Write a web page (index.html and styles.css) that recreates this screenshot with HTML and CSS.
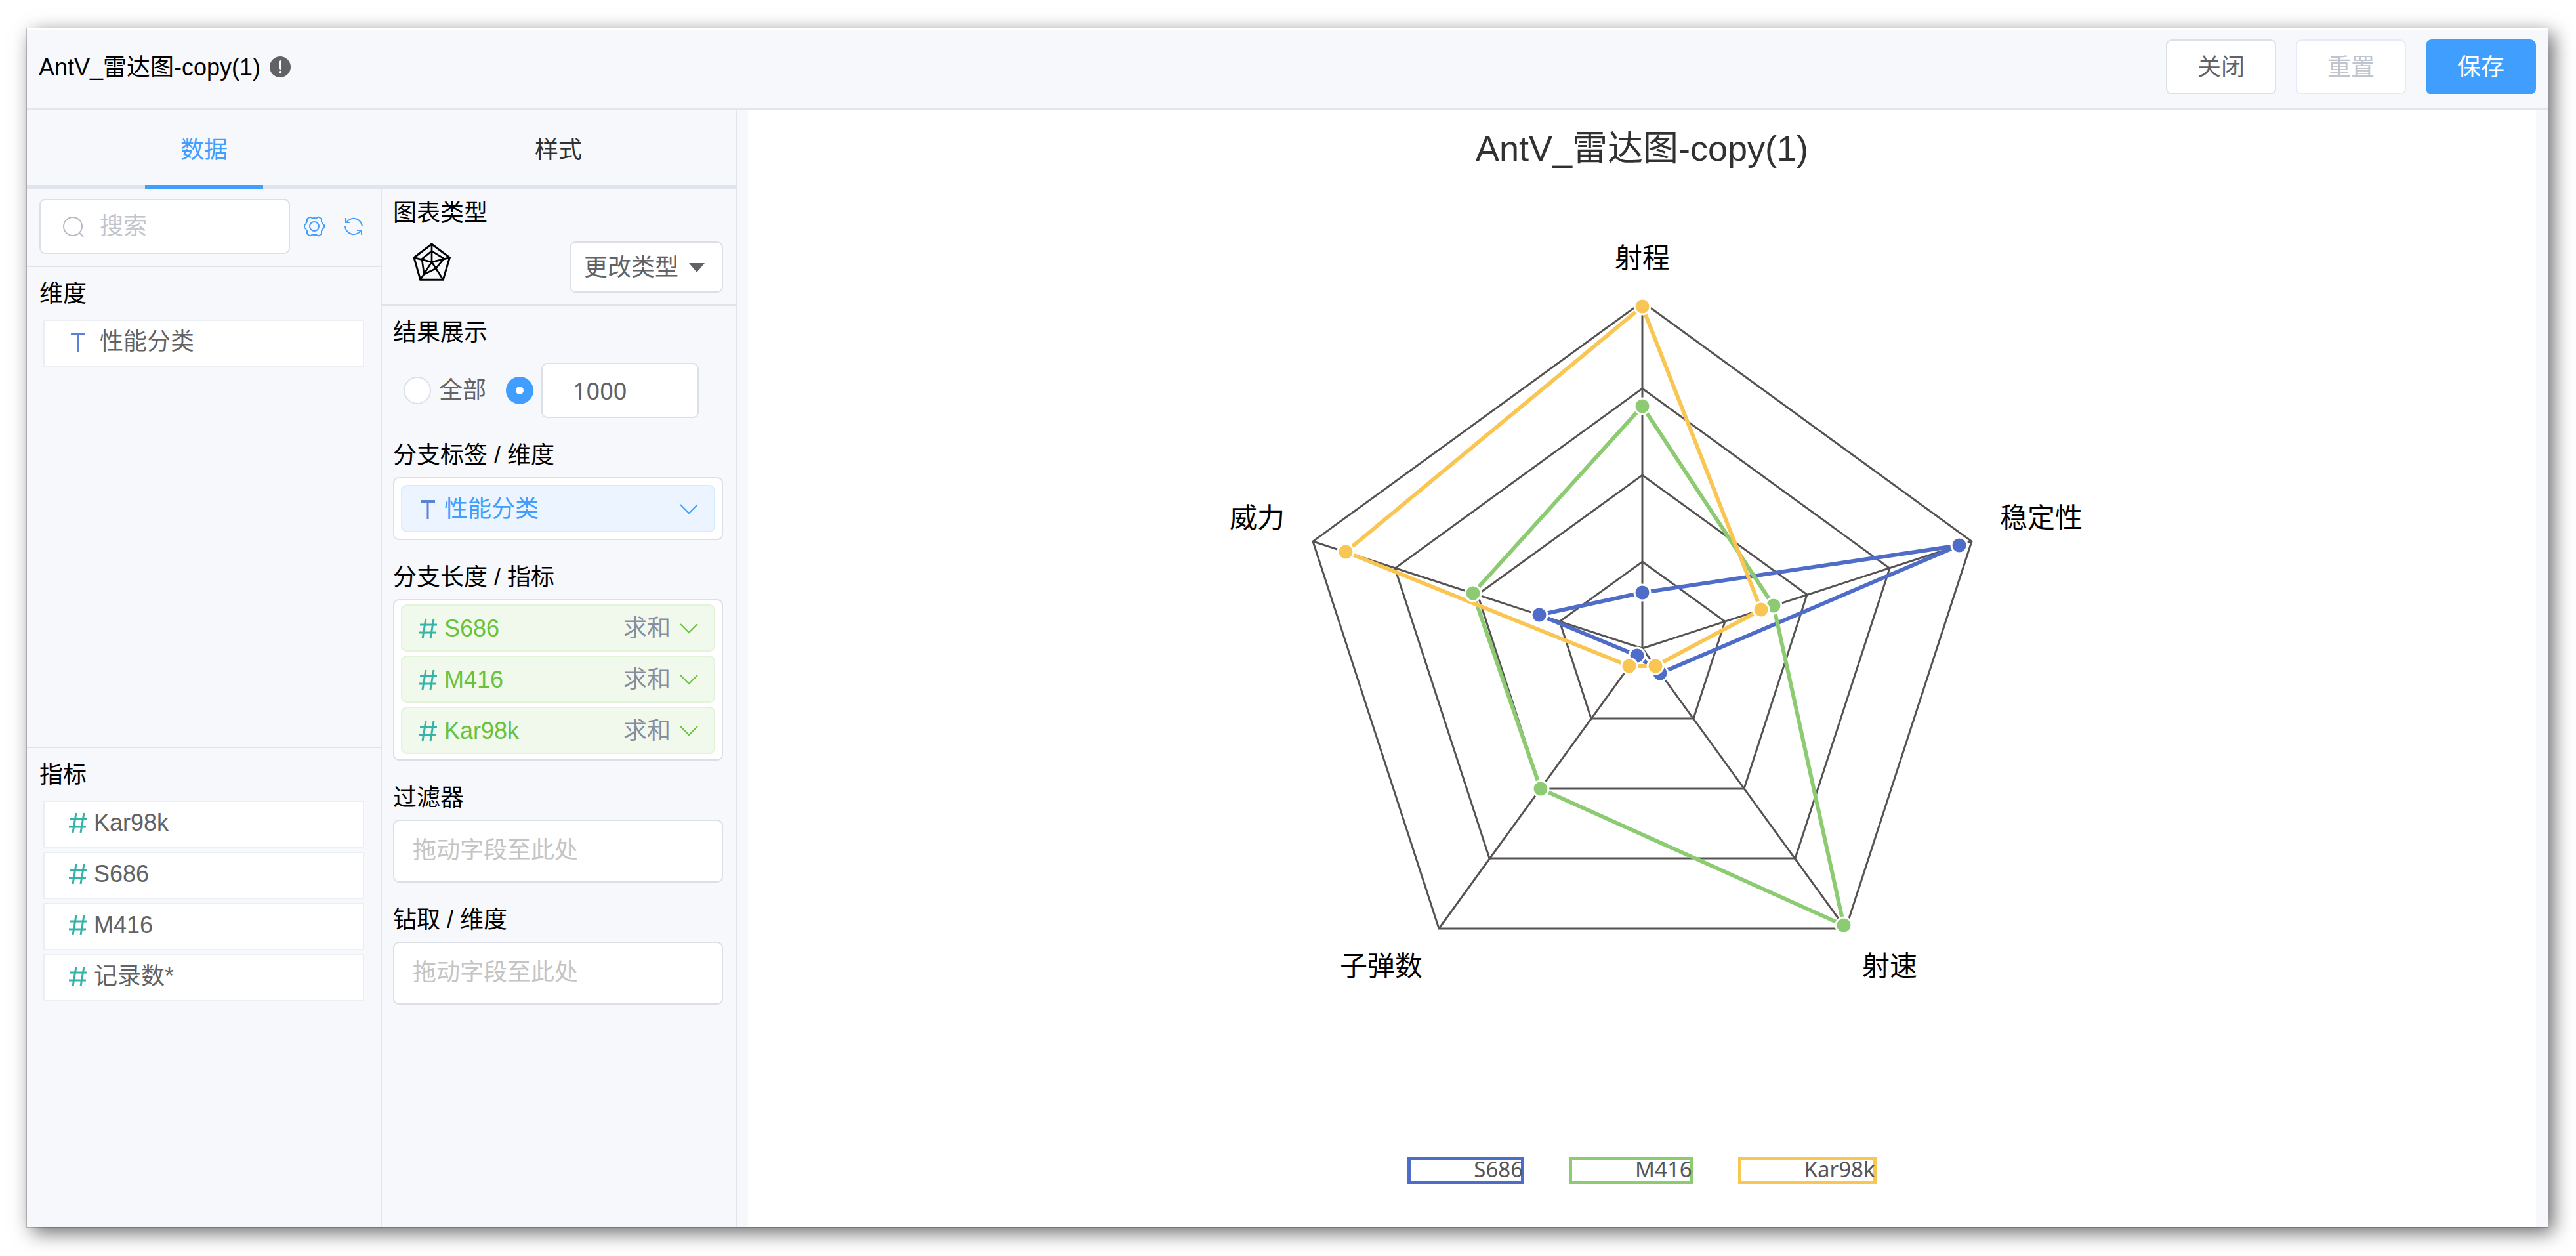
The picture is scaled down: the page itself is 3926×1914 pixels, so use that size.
FILE: index.html
```html
<!DOCTYPE html>
<html lang="zh-CN">
<head>
<meta charset="utf-8">
<title>AntV_雷达图-copy(1)</title>
<link rel="stylesheet" href="styles.css">
</head>
<body>
<svg class="sprite" aria-hidden="true">
  <symbol id="i-hash" viewBox="0 0 38 36"><path d="M16 3 11 33M28 3 23 33M7 12H33M5 24H31" fill="none" stroke="currentColor" stroke-width="3"/></symbol>
  <symbol id="i-text" viewBox="0 0 38 36"><path d="M8 6H30" fill="none" stroke="currentColor" stroke-width="4"/><path d="M19 6V33" fill="none" stroke="currentColor" stroke-width="3"/></symbol>
  <symbol id="i-down" viewBox="0 0 28 16"><path d="M1 1 14 14 27 1" fill="none" stroke="currentColor" stroke-width="2"/></symbol>
</svg>
<div class="app">
  <header class="topbar">
    <h1 class="topbar-title">AntV_雷达图-copy(1)</h1>
    <svg class="info" viewBox="0 0 32 32" role="img" aria-label="提示"><circle cx="16" cy="16" r="16" fill="#606266"/><path d="M16 8V18" stroke="#fff" stroke-width="4" stroke-linecap="round"/><circle cx="16" cy="24" r="2.2" fill="#fff"/></svg>
    <div class="topbar-actions">
      <button class="btn" type="button">关闭</button>
      <button class="btn" type="button" disabled>重置</button>
      <button class="btn btn-primary" type="button">保存</button>
    </div>
  </header>
  <div class="workspace">
    <aside class="panel">
      <div class="tabs" role="tablist">
        <button class="tab is-active" type="button" role="tab" aria-selected="true">数据</button>
        <button class="tab" type="button" role="tab" aria-selected="false">样式</button>
      </div>
      <div class="columns">
        <div class="column">
          <div class="search-row">
            <label class="search">
              <svg class="search-icon" viewBox="0 0 32 32" aria-hidden="true"><circle cx="15" cy="16" r="14" fill="none" stroke="currentColor" stroke-width="2"/><path d="M25 26 31 32" stroke="currentColor" stroke-width="2"/></svg>
              <input class="search-input" type="text" placeholder="搜索" aria-label="搜索">
            </label>
            <button class="icon-btn" type="button" aria-label="设置"><svg viewBox="0 0 32 32"><path d="M9.500 1.500 13 3.500Q16 2.500 19 3.500L22.500 1.500 27 4.500V9Q28.500 10.500 29 12.500L31 14V18L29 19.500Q28.500 21.500 27 23V27.500L22.500 30.500 19 28.500Q16 29.500 13 28.500L9.500 30.500 5 27.500V23Q3.500 21.500 3 19.500L1 18V14L3 12.500Q3.500 10.500 5 9V4.500Z" fill="none" stroke="currentColor" stroke-width="2" stroke-linejoin="round"/><circle cx="16" cy="16" r="7" fill="none" stroke="currentColor" stroke-width="2"/></svg></button>
            <button class="icon-btn" type="button" aria-label="刷新"><svg viewBox="0 0 32 32"><path d="M4 3V10H11M5 10A13 13 0 0 1 29 16M28 29V22H21M27 22A13 13 0 0 1 3 16" fill="none" stroke="currentColor" stroke-width="2"/></svg></button>
          </div>
          <section class="fields fields-dim">
            <h2 class="label">维度</h2>
            <ul class="field-list">
              <li class="field"><svg class="ico ico-text"><use href="#i-text"/></svg>性能分类</li>
            </ul>
          </section>
          <section class="fields">
            <h2 class="label">指标</h2>
            <ul class="field-list">
              <li class="field"><svg class="ico ico-hash"><use href="#i-hash"/></svg>Kar98k</li>
              <li class="field"><svg class="ico ico-hash"><use href="#i-hash"/></svg>S686</li>
              <li class="field"><svg class="ico ico-hash"><use href="#i-hash"/></svg>M416</li>
              <li class="field"><svg class="ico ico-hash"><use href="#i-hash"/></svg>记录数*</li>
            </ul>
          </section>
        </div>
        <div class="column">
          <section class="chart-type">
            <h2 class="label">图表类型</h2>
            <div class="chart-type-row">
              <svg class="radar-icon" viewBox="0 0 174 174" fill="none" stroke="#000" stroke-width="9" role="img" aria-label="雷达图"><path d="M87 6 169 68 139 169H35L6 68Z"/><path d="M87 38 143 72 105 118 52 144 42 74Z" stroke-width="8"/><path d="M87 88V6M87 88 169 68M87 88 139 169M87 88 35 169M87 88 6 68" stroke-width="8"/></svg>
              <button class="btn btn-type" type="button">更改类型<svg class="caret" viewBox="0 0 24 14" aria-hidden="true"><path d="M0 0H24L12 14Z" fill="currentColor"/></svg></button>
            </div>
          </section>
          <div class="settings">
            <section>
              <h2 class="label">结果展示</h2>
              <div class="result-row">
                <input class="radio" type="radio" name="result" id="result-all"><label class="radio-label" for="result-all">全部</label>
                <input class="radio" type="radio" name="result" id="result-limit" aria-label="限制条数" checked>
                <input class="limit" type="text" value="1000" aria-label="条数">
              </div>
            </section>
            <section>
              <h2 class="label">分支标签 / 维度</h2>
              <div class="drop drop-single">
                <button class="tag tag-dim" type="button"><svg class="ico ico-text"><use href="#i-text"/></svg><span class="tag-name">性能分类</span><svg class="down"><use href="#i-down"/></svg></button>
              </div>
            </section>
            <section>
              <h2 class="label">分支长度 / 指标</h2>
              <div class="drop">
                <button class="tag" type="button"><svg class="ico ico-hash"><use href="#i-hash"/></svg><span class="tag-name">S686</span><span class="agg">求和</span><svg class="down"><use href="#i-down"/></svg></button>
                <button class="tag" type="button"><svg class="ico ico-hash"><use href="#i-hash"/></svg><span class="tag-name">M416</span><span class="agg">求和</span><svg class="down"><use href="#i-down"/></svg></button>
                <button class="tag" type="button"><svg class="ico ico-hash"><use href="#i-hash"/></svg><span class="tag-name">Kar98k</span><span class="agg">求和</span><svg class="down"><use href="#i-down"/></svg></button>
              </div>
            </section>
            <section>
              <h2 class="label">过滤器</h2>
              <div class="drop drop-empty">拖动字段至此处</div>
            </section>
            <section>
              <h2 class="label">钻取 / 维度</h2>
              <div class="drop drop-empty">拖动字段至此处</div>
            </section>
          </div>
        </div>
      </div>
    </aside>
    <main class="canvas">
      <h2 class="chart-title">AntV_雷达图-copy(1)</h2>
      <svg class="radar" viewBox="-680 -628 1360 1150" role="img" aria-label="雷达图">
        <g class="grid">
          <path d="M0-132 126-41 78 107H-78L-126-41Z"/>
          <path d="M0-264 251-82 155 214H-155L-251-82Z"/>
          <path d="M0-396 377-122 233 320H-233L-377-122Z"/>
          <path d="M0-528 502-163 310 427H-310L-502-163Z"/>
          <path d="M0 0V-528M0 0 502-163M0 0 310 427M0 0-310 427M0 0-502-163"/>
        </g>
        <path class="line s-blue" d="M0-85 483-157 27 38-8 11-157-51Z"/>
        <path class="line s-green" d="M0-369 200-65 307 422-155 214-258-84Z"/>
        <path class="line s-yellow" d="M0-521 181-59 20 27-20 27-452-147Z"/>
        <g class="dots s-blue"><circle cx="0" cy="-85" r="12"/><circle cx="483" cy="-157" r="12"/><circle cx="27" cy="38" r="12"/><circle cx="-8" cy="11" r="12"/><circle cx="-157" cy="-51" r="12"/></g>
        <g class="dots s-green"><circle cx="0" cy="-369" r="12"/><circle cx="200" cy="-65" r="12"/><circle cx="307" cy="422" r="12"/><circle cx="-155" cy="214" r="12"/><circle cx="-258" cy="-84" r="12"/></g>
        <g class="dots s-yellow"><circle cx="0" cy="-521" r="12"/><circle cx="181" cy="-59" r="12"/><circle cx="20" cy="27" r="12"/><circle cx="-20" cy="27" r="12"/><circle cx="-452" cy="-147" r="12"/></g>
        <g class="axis-names">
          <text x="0" y="-580" text-anchor="middle">射程</text>
          <text x="545" y="-184">稳定性</text>
          <text x="335" y="499">射速</text>
          <text x="-335" y="499" text-anchor="end">子弹数</text>
          <text x="-545" y="-184" text-anchor="end">威力</text>
        </g>
      </svg>
      <ul class="legend">
        <li class="legend-item s-blue"><span>S686</span></li>
        <li class="legend-item s-green"><span>M416</span></li>
        <li class="legend-item s-yellow"><span>Kar98k</span></li>
      </ul>
    </main>
  </div>
</div>
</body>
</html>
```
FILE: styles.css
```css
* { box-sizing: border-box; }

body {
  margin: 0;
  min-height: 100vh;
  display: flex;
  padding: 43px 43px 44px 41px;
  background: #fff;
  color: #000;
  font: 36px/46px "Liberation Sans", "Noto Sans CJK SC", sans-serif;
}

h1, h2, ul { margin: 0; padding: 0; font-size: inherit; font-weight: 400; list-style: none; }
button, input { font: inherit; color: inherit; margin: 0; }
button { cursor: pointer; }
svg { display: block; flex: none; }
.sprite { position: absolute; width: 0; height: 0; }

.app {
  flex: 1;
  min-width: 0;
  display: flex;
  flex-direction: column;
  background: #f6f8fb;
  border-top: 2px solid #fff;
  box-shadow: 0 0 0 1px rgba(0, 0, 0, .2), 8px 8px 28px rgba(0, 0, 0, .6);
}

/* top bar */
.topbar {
  display: flex;
  align-items: center;
  padding: 15px 18px 20px;
  border-bottom: 3px solid #e4e6e9;
}
.topbar-title { padding-top: 2px; }
.info { width: 32px; height: 32px; margin-left: 14px; }
.topbar-actions { display: flex; gap: 30px; margin-left: auto; }

.btn {
  height: 84px;
  padding: 2px 46px 0;
  border: 2px solid #dcdfe6;
  border-radius: 9px;
  background: #fff;
  color: #606266;
  white-space: nowrap;
}
.btn:disabled { color: #c0c4cc; border-color: #e6ebf5; cursor: default; }
.btn-primary { background: #409eff; border-color: #409eff; color: #fff; }

/* layout */
.workspace { flex: 1; display: flex; }
.panel {
  flex: none;
  width: 1082px;
  display: flex;
  flex-direction: column;
  border-right: 2px solid #e2e4e7;
}
.tabs { display: flex; box-shadow: inset 0 -6px #dfe4ed; }
.tab {
  flex: 1;
  display: flex;
  flex-direction: column;
  align-items: center;
  height: 121px;
  padding: 39px 0 0;
  border: 0;
  background: none;
  color: #303133;
}
.tab.is-active { color: #409eff; }
.tab.is-active::after { content: ""; width: 180px; height: 6px; margin-top: auto; background: #409eff; }
.columns { flex: 1; display: flex; }
.column { flex: 1; min-width: 0; display: flex; flex-direction: column; }
.column + .column { border-left: 2px solid #e2e4e7; }

/* field list column */
.search-row {
  display: flex;
  align-items: center;
  padding: 15px 25px 18px 19px;
  border-bottom: 2px solid #e2e4e7;
}
.search {
  flex: 1;
  min-width: 0;
  display: flex;
  align-items: center;
  gap: 24px;
  height: 84px;
  padding: 0 34px;
  border: 2px solid #dcdfe6;
  border-radius: 9px;
  background: #fff;
}
.search-icon { width: 32px; height: 32px; color: #b4b9c4; }
.search-input { flex: 1; min-width: 0; padding: 0; border: 0; outline: 0; background: none; }
.search-input::placeholder { color: #c0c4cc; }
.icon-btn { margin-left: 21px; padding: 0; border: 0; background: none; color: #409eff; }
.icon-btn + .icon-btn { margin-left: 28px; }
.icon-btn svg { width: 32px; height: 32px; }

.fields { flex: 1; padding-top: 18px; }
.fields-dim { border-bottom: 2px solid #e2e4e7; }
.fields .label { padding-left: 19px; }
.field-list { display: grid; gap: 6px; padding: 16px 25px; }
.field {
  display: flex;
  align-items: center;
  gap: 5px;
  height: 72px;
  padding: 0 32px 4px;
  border: 2px solid #ebeef2;
  background: #fff;
  color: #606266;
}
.fields-dim .field { gap: 14px; }
.ico { width: 38px; height: 36px; }
.ico-hash { color: #36b3a8; }
.ico-text { color: #5c82d8; }

/* settings column */
.chart-type { padding: 14px 19px 18px 17px; border-bottom: 2px solid #e2e4e7; }
.chart-type-row { display: flex; justify-content: space-between; align-items: flex-start; padding: 20px 0 0 30px; }
.radar-icon { width: 58px; height: 58px; margin-top: 2px; }
.btn-type { display: flex; align-items: center; gap: 16px; height: 78px; padding: 2px 26px 0 20px; }
.caret { width: 24px; height: 14px; }

.settings { display: grid; grid-template-columns: minmax(0, 1fr); gap: 34px; padding: 18px 19px 18px 17px; }
.result-row { display: flex; align-items: center; padding: 23px 37px 0 16px; }
.radio {
  appearance: none;
  flex: none;
  width: 42px;
  height: 42px;
  border: 2px solid #dcdfe6;
  border-radius: 50%;
  background: #fff;
}
.radio:checked { border: 15px solid #409eff; }
.radio-label { margin: 0 30px 0 12px; color: #606266; }
.limit {
  flex: 1;
  min-width: 0;
  height: 84px;
  margin-left: 12px;
  padding: 0 46px;
  border: 2px solid #dcdfe6;
  border-radius: 9px;
  background: #fff;
  color: #606266;
  font-family: "Noto Sans", sans-serif;
}

.drop {
  display: grid;
  gap: 6px;
  margin-top: 10px;
  padding: 6px 10px 8px;
  border: 2px solid #dcdfe6;
  border-radius: 9px;
  background: #fff;
}
.drop-single { padding: 10px; }
.drop-empty { height: 96px; padding: 22px 28px; color: #c4c4c4; }
.tag {
  display: flex;
  align-items: center;
  height: 72px;
  padding: 2px 24px 0 20px;
  border: 2px solid #e1f3d8;
  border-radius: 9px;
  background: #f0f9eb;
  color: #67c23a;
  text-align: left;
}
.tag-dim { border-color: #d9ecff; background: #ebf4ff; color: #409eff; }
.tag-name { flex: 1; margin-left: 6px; }
.agg { color: #878d9f; }
.down { width: 28px; height: 16px; margin-left: 14px; }

/* chart */
.canvas {
  flex: 1;
  min-width: 0;
  display: flex;
  flex-direction: column;
  align-items: center;
  margin: 0 18px 0 17px;
  padding: 26px 0 65px;
  background: #fff;
}
.chart-title { font-size: 54px; line-height: 66px; color: #303133; }
.radar { width: 1360px; max-width: 100%; margin-top: 101px; }
.grid { fill: none; stroke: #565252; stroke-width: 3; }
.s-blue { --series: #4f6cc8; }
.s-green { --series: #8dcb72; }
.s-yellow { --series: #fac653; }
.line { fill: none; stroke: var(--series); stroke-width: 6; stroke-linejoin: round; }
.dots { fill: var(--series); stroke: #fff; stroke-width: 3; }
.axis-names { font-size: 42px; fill: #000; }
.legend { display: flex; flex-wrap: wrap; gap: 68px; margin-top: auto; }
.legend-item {
  height: 42px;
  padding: 0 2px 0 101px;
  box-shadow: inset 0 0 0 5px var(--series);
  color: #555;
  font: 33px/38px "Noto Sans", sans-serif;
}
```
